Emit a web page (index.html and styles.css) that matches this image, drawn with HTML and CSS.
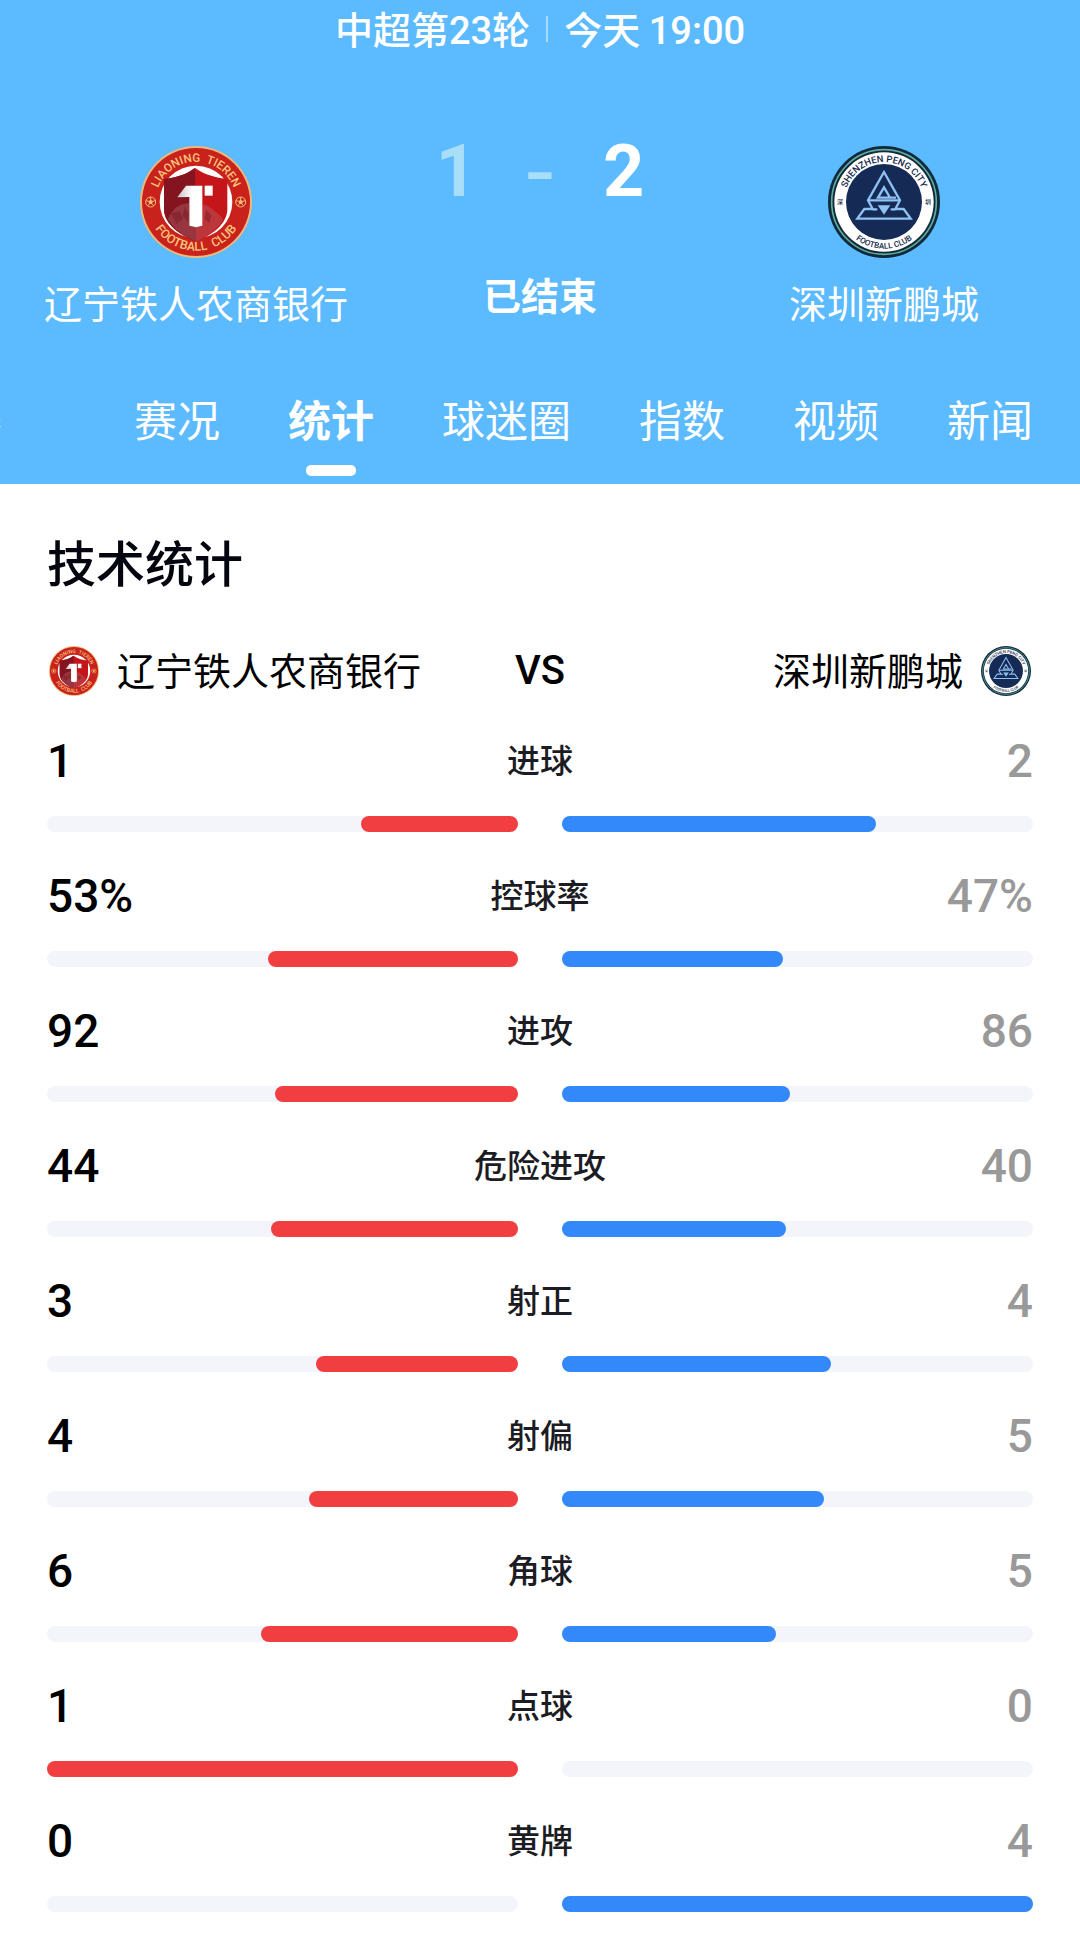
FILE: index.html
```html
<!DOCTYPE html>
<html lang="zh-CN">
<head>
<meta charset="utf-8">
<meta name="viewport" content="width=device-width, initial-scale=1">
<title>辽宁铁人农商银行 1-2 深圳新鹏城</title>
<link rel="stylesheet" href="styles.css">
</head>
<body>
<header class="match">
  <p class="match-meta"><span>中超第<span class="num">23</span>轮</span><i class="divider"></i><span>今天 <time class="num">19:00</time></span></p>
  <div class="scoreboard">
    <div class="side">
      <svg class="badge badge-lg" viewBox="-168 -168 336 336" role="img" aria-label="辽宁铁人">
        <defs>
          <linearGradient id="numeral" x1="0" y1="0" x2="1" y2="0">
            <stop offset="0" stop-color="#c9c4c6"/>
            <stop offset="0.6" stop-color="#fff"/>
          </linearGradient>
          <path id="arc-lt-top" d="M-121 0A121 121 0 0 1 121 0"/>
          <path id="arc-lt-bottom" d="M-146 0A146 146 0 0 0 146 0"/>
        </defs>
        <g id="badge-liaoning">
          <circle r="168" fill="#efb878"/>
          <circle r="162" fill="#c9211b"/>
          <circle r="109" fill="#fff"/>
          <path d="M-3-102C-30-82-62-72-96-69V24C-94 66-50 98 0 119C50 98 92 66 94 24V-69C60-72 26-82-3-102Z" fill="#c4151b"/>
          <path d="M-3-102C-30-82-62-72-96-69V24C-94 66-50 98 0 119Z" fill="#841420"/>
          <path d="M-84 52C-72 20-48 4-20 4V71C-8 76 8 76 19 71V8C42 8 46 22 60 30C72 38 78 46 80 56C60 86 30 104 0 119C-34 104-66 84-84 52Z" fill="#b36a6c" opacity="0.4"/>
          <path d="M-76 34L-50 28-38 50-58 66ZM-34 14L-22 34-24 60-40 42ZM30 24L46 40 40 62 26 52Z" fill="#7c1822" opacity="0.5"/>
          <path d="M-56-14L-30-49H19V71L0 76L-20 71V-15Z" fill="url(#numeral)"/>
          <rect x="26" y="-49" width="24" height="30" fill="#fff"/>
          <g fill="none" stroke="#f3bd78" stroke-width="3">
            <circle cx="-136" r="15"/><circle cx="134" r="15"/>
            <path d="M-136-15V-6M-150-4L-142-2M-122-4L-130-2M-145 12L-140 6M-127 12L-132 6M134-15V-6M120-4L128-2M148-4L140-2M125 12L130 6M143 12L138 6"/>
          </g>
          <path d="M-136-7L-129-2-132 6H-140L-143-2ZM134-7L141-2 138 6H130L127-2Z" fill="#f3bd78"/>
          <g class="badge-text" fill="#f6c47c">
            <text font-size="35"><textPath href="#arc-lt-top" startOffset="50%">LIAONING&#160; TIEREN</textPath></text>
            <text font-size="37"><textPath href="#arc-lt-bottom" startOffset="50%">FOOTBALL&#160; CLUB</textPath></text>
          </g>
        </g>
      </svg>
      <span class="side-name">辽宁铁人农商银行</span>
    </div>
    <div class="result">
      <p class="score"><span class="goals lost">1</span><span class="dash">-</span><span class="goals">2</span></p>
      <p class="status">已结束</p>
    </div>
    <div class="side">
      <svg class="badge badge-lg" viewBox="-168 -168 336 336" role="img" aria-label="深圳新鹏城">
        <defs>
          <path id="arc-sz-top" d="M-120 0A120 120 0 0 1 120 0"/>
          <path id="arc-sz-bottom" d="M-140 0A140 140 0 0 0 140 0"/>
        </defs>
        <g id="badge-shenzhen">
          <circle r="168" fill="#10293c"/>
          <circle r="157" fill="none" stroke="#5fae9c" stroke-width="5"/>
          <circle r="149" fill="#fff"/>
          <circle r="114" fill="#152a55"/>
          <g fill="none" stroke="#8fc1f2" stroke-width="7">
            <path d="M0-90L-48-5L-34 21H-59L-80 50H80L59 21H34L48-5Z"/>
            <path d="M36-13H-18L0-44L17-15M-48-5H46M-34 22L-20 22M34 22L20 22"/>
          </g>
          <path d="M-19 10H19L0 38Z" fill="#8fc1f2"/>
          <g class="badge-text" fill="#16294a">
            <text font-size="28"><textPath href="#arc-sz-top" startOffset="50%">SHENZHEN PENG CITY</textPath></text>
            <text font-size="24"><textPath href="#arc-sz-bottom" startOffset="50%">FOOTBALL CLUB</textPath></text>
            <text x="-132" y="7" font-size="18">深</text>
            <text x="132" y="7" font-size="18">圳</text>
          </g>
        </g>
      </svg>
      <span class="side-name">深圳新鹏城</span>
    </div>
  </div>
  <nav class="tabs">
    <button class="tab tab-past" type="button">赛</button>
    <button class="tab" type="button">赛况</button>
    <button class="tab active" type="button" aria-current="page">统计</button>
    <button class="tab" type="button">球迷圈</button>
    <button class="tab" type="button">指数</button>
    <button class="tab" type="button">视频</button>
    <button class="tab" type="button">新闻</button>
  </nav>
</header>

<main class="stats">
  <h1 class="stats-title">技术统计</h1>
  <div class="versus">
    <div class="club"><svg class="badge badge-sm" viewBox="-168 -168 336 336" aria-hidden="true"><use href="#badge-liaoning"/></svg><span class="club-name">辽宁铁人农商银行</span></div>
    <span class="vs">VS</span>
    <div class="club club-away"><span class="club-name">深圳新鹏城</span><svg class="badge badge-sm" viewBox="-168 -168 336 336" aria-hidden="true"><use href="#badge-shenzhen"/></svg></div>
  </div>
  <ul class="stat-list">
    <li class="stat">
      <div class="stat-line"><span class="home">1</span><span class="label">进球</span><span class="away">2</span></div>
      <div class="bars"><div class="bar bar-home"><div class="fill" style="width:33.33%"></div></div><div class="bar bar-away"><div class="fill" style="width:66.67%"></div></div></div>
    </li>
    <li class="stat">
      <div class="stat-line"><span class="home">53%</span><span class="label">控球率</span><span class="away">47%</span></div>
      <div class="bars"><div class="bar bar-home"><div class="fill" style="width:53%"></div></div><div class="bar bar-away"><div class="fill" style="width:47%"></div></div></div>
    </li>
    <li class="stat">
      <div class="stat-line"><span class="home">92</span><span class="label">进攻</span><span class="away">86</span></div>
      <div class="bars"><div class="bar bar-home"><div class="fill" style="width:51.69%"></div></div><div class="bar bar-away"><div class="fill" style="width:48.31%"></div></div></div>
    </li>
    <li class="stat">
      <div class="stat-line"><span class="home">44</span><span class="label">危险进攻</span><span class="away">40</span></div>
      <div class="bars"><div class="bar bar-home"><div class="fill" style="width:52.38%"></div></div><div class="bar bar-away"><div class="fill" style="width:47.62%"></div></div></div>
    </li>
    <li class="stat">
      <div class="stat-line"><span class="home">3</span><span class="label">射正</span><span class="away">4</span></div>
      <div class="bars"><div class="bar bar-home"><div class="fill" style="width:42.86%"></div></div><div class="bar bar-away"><div class="fill" style="width:57.14%"></div></div></div>
    </li>
    <li class="stat">
      <div class="stat-line"><span class="home">4</span><span class="label">射偏</span><span class="away">5</span></div>
      <div class="bars"><div class="bar bar-home"><div class="fill" style="width:44.44%"></div></div><div class="bar bar-away"><div class="fill" style="width:55.56%"></div></div></div>
    </li>
    <li class="stat">
      <div class="stat-line"><span class="home">6</span><span class="label">角球</span><span class="away">5</span></div>
      <div class="bars"><div class="bar bar-home"><div class="fill" style="width:54.55%"></div></div><div class="bar bar-away"><div class="fill" style="width:45.45%"></div></div></div>
    </li>
    <li class="stat">
      <div class="stat-line"><span class="home">1</span><span class="label">点球</span><span class="away">0</span></div>
      <div class="bars"><div class="bar bar-home"><div class="fill" style="width:100%"></div></div><div class="bar bar-away"><div class="fill" style="width:0%"></div></div></div>
    </li>
    <li class="stat">
      <div class="stat-line"><span class="home">0</span><span class="label">黄牌</span><span class="away">4</span></div>
      <div class="bars"><div class="bar bar-home"><div class="fill" style="width:0%"></div></div><div class="bar bar-away"><div class="fill" style="width:100%"></div></div></div>
    </li>
  </ul>
</main>
</body>
</html>
```
FILE: styles.css
```css
* {
  box-sizing: border-box;
}

body,
p,
h1,
ul {
  margin: 0;
  padding: 0;
}

body {
  background: #fff;
  color: #000;
  font-family: "Noto Sans CJK SC", sans-serif;
}

.num,
.goals,
.vs,
.home,
.away {
  font-family: Roboto, "Noto Sans CJK SC", sans-serif;
}

.badge {
  flex: none;
}

.badge-lg {
  width: 112px;
  height: 112px;
}

.badge-sm {
  width: 50px;
  height: 50px;
}

.badge-text {
  font-family: Roboto, "Noto Sans CJK SC", sans-serif;
  font-weight: 500;
  text-anchor: middle;
}

/* Match header */
.match {
  background: #5cbaff;
  color: #fff;
  overflow: hidden;
}

.match-meta {
  display: flex;
  justify-content: center;
  align-items: center;
  height: 58px;
  font-size: 38px;
  line-height: 44px;
  font-weight: 500;
}

.divider {
  width: 2px;
  height: 26px;
  margin: 0 16px;
  background: #a9dafc;
}

.scoreboard {
  display: grid;
  grid-template-columns: repeat(3, 1fr);
  padding: 88px 24px 0;
}

.side {
  display: flex;
  flex-direction: column;
  align-items: center;
  gap: 22px;
}

.side-name {
  font-size: 38px;
  line-height: 44px;
  white-space: nowrap;
}

.result {
  display: flex;
  flex-direction: column;
  align-items: center;
  gap: 74px;
}

.score {
  display: flex;
  align-items: center;
  gap: 44px;
  height: 52px;
}

.goals {
  width: 46px;
  font-size: 72px;
  line-height: 52px;
  font-weight: 700;
  text-align: center;
}

.lost {
  color: #a9def9;
}

.dash {
  color: #a9def9;
  font-family: Inter, sans-serif;
  font-size: 72px;
  line-height: 48px;
  font-weight: 500;
}

.status {
  font-size: 38px;
  line-height: 44px;
  font-weight: 700;
}

.tabs {
  display: flex;
  justify-content: flex-end;
  gap: 68px;
  margin-top: 64px;
  padding-right: 47px;
}

.tab {
  position: relative;
  flex: none;
  padding: 0 0 36px;
  border: 0;
  background: none;
  color: #fff;
  font: 400 43px/60px "Noto Sans CJK SC", sans-serif;
  cursor: pointer;
}

.tab-past {
  width: 107px;
  text-align: left;
}

.active {
  font-weight: 700;
}

.active::after {
  content: "";
  position: absolute;
  bottom: 8px;
  left: 50%;
  width: 50px;
  height: 11px;
  margin-left: -25px;
  border-radius: 5px;
  background: #fff;
}

/* Statistics */
.stats {
  padding: 47px 47px 24px;
}

.stats-title {
  color: #05050f;
  font-size: 49px;
  line-height: 60px;
  font-weight: 500;
}

.versus {
  display: grid;
  grid-template-columns: 1fr auto 1fr;
  align-items: center;
  margin-top: 55px;
  padding: 0 2px;
  font-size: 38px;
  line-height: 50px;
}

.club {
  display: flex;
  gap: 18px;
}

.club-name {
  line-height: 46px;
}

.club-away {
  justify-content: flex-end;
}

.vs {
  font-size: 40px;
  font-weight: 500;
}

.stat-list {
  display: grid;
  gap: 40px;
  margin-top: 41px;
  list-style: none;
}

.stat-line {
  display: grid;
  grid-template-columns: 1fr auto 1fr;
  line-height: 48px;
}

.home,
.away {
  font-size: 46px;
  font-weight: 500;
}

.away {
  color: #999;
  text-align: right;
}

.label {
  color: #1c1c24;
  font-size: 33px;
  line-height: 44px;
  font-weight: 500;
}

.bars {
  display: grid;
  grid-template-columns: 1fr 1fr;
  gap: 44px;
  margin-top: 31px;
}

.bar {
  display: flex;
  height: 16px;
  border-radius: 8px;
  background: #f4f5fa;
}

.bar-home {
  justify-content: flex-end;
}

.fill {
  border-radius: 8px;
}

.bar-home .fill {
  background: #f13e40;
}

.bar-away .fill {
  background: #3388fa;
}
```
